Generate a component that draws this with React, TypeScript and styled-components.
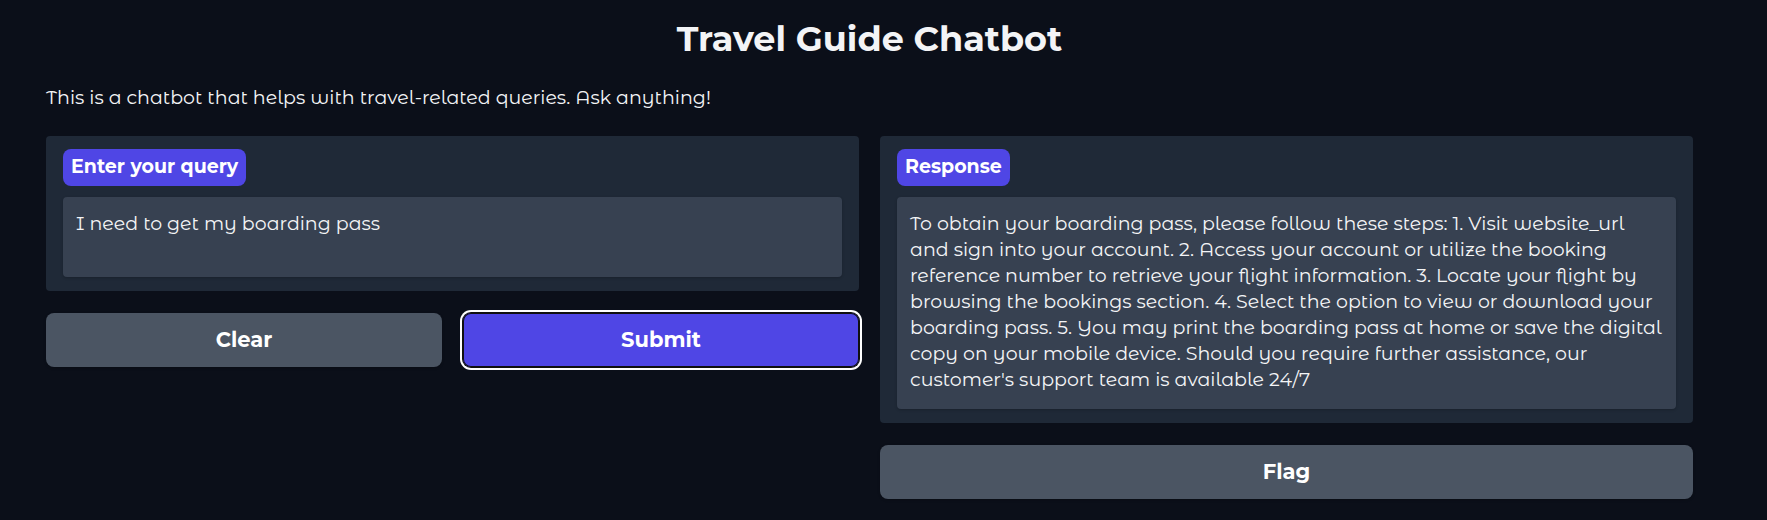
import React, { useState } from "react";
import styled, { createGlobalStyle } from "styled-components";

const GlobalStyle = createGlobalStyle`
  *, *::before, *::after { box-sizing: border-box; }
  body {
    margin: 0;
    background: #0b0f19;
    color: #f3f4f6;
    font-family: "Montserrat Alternates", Montserrat, Inter, "Open Sans", sans-serif;
    font-size: 19px;
    line-height: 27px;
  }
`;

const Page = styled.main`
  padding: 18px 74px 18px 46px;
`;

const Title = styled.h1`
  margin: 0 0 24px;
  font-family: Montserrat, Inter, "Open Sans", sans-serif;
  font-size: 35px;
  line-height: 42px;
  font-weight: 700;
  text-align: center;
`;

const Description = styled.p`
  margin: 0 0 25px;
`;

const Columns = styled.div`
  display: grid;
  grid-template-columns: 1fr 1fr;
  align-items: start;
  gap: 21px;
`;

const Column = styled.section`
  display: flex;
  flex-direction: column;
  gap: 22px;
  min-width: 0;
`;

const Panel = styled.div`
  display: flex;
  flex-direction: column;
  align-items: flex-start;
  gap: 11px;
  padding: 13px 17px 14px;
  border-radius: 4px;
  background: #1f2937;
`;

const FieldLabel = styled.label`
  padding: 4px 8px 6px;
  border-radius: 8px;
  background: #4f46e5;
  color: #ffffff;
  font-family: Montserrat, Inter, "Open Sans", sans-serif;
  font-weight: 700;
`;

const TextBox = styled.textarea<{ $minHeight: number }>`
  display: block;
  width: 100%;
  min-height: ${(p) => p.$minHeight}px;
  padding: 14px 13px;
  border: 0;
  border-radius: 4px;
  outline: none;
  resize: none;
  overflow: hidden;
  background: #374151;
  color: #f3f4f6;
  font: inherit;
  line-height: 26px;
  box-shadow: 0 1px 3px rgba(0, 0, 0, 0.2);
`;

const ButtonRow = styled.div`
  display: grid;
  grid-template-columns: 1fr 1fr;
  gap: 21px;
`;

const Button = styled.button<{ $primary?: boolean }>`
  height: 54px;
  padding: 0 16px 2px;
  border: 0;
  border-radius: 8px;
  background: ${(p) => (p.$primary ? "#4f46e5" : "#4b5563")};
  color: #ffffff;
  font-family: Montserrat, Inter, "Open Sans", sans-serif;
  font-size: 21px;
  line-height: 27px;
  font-weight: 700;
  cursor: pointer;
  box-shadow: ${(p) =>
    p.$primary
      ? "inset 0 0 0 1px #101010, 0 0 0 1px #101010, 0 0 0 3px #ffffff"
      : "0 1px 3px rgba(0, 0, 0, 0.2)"};
`;

const ANSWER = [
  "To obtain your boarding pass, please follow these steps: 1. Visit website_url",
  "and sign into your account. 2. Access your account or utilize the booking",
  "reference number to retrieve your flight information. 3. Locate your flight by",
  "browsing the bookings section. 4. Select the option to view or download your",
  "boarding pass. 5. You may print the boarding pass at home or save the digital",
  "copy on your mobile device. Should you require further assistance, our",
  "customer's support team is available 24/7",
].join("\n");

export default function App() {
  const [query, setQuery] = useState("I need to get my boarding pass");

  return (
    <>
      <GlobalStyle />
      <Page>
        <Title>Travel Guide Chatbot</Title>
        <Description>
          This is a chatbot that helps with travel-related queries. Ask anything!
        </Description>
        <Columns>
          <Column>
            <Panel>
              <FieldLabel htmlFor="query">Enter your query</FieldLabel>
              <TextBox
                id="query"
                rows={2}
                $minHeight={80}
                spellCheck={false}
                value={query}
                onChange={(e) => setQuery(e.target.value)}
              />
            </Panel>
            <ButtonRow>
              <Button type="button" onClick={() => setQuery("")}>Clear</Button>
              <Button type="submit" $primary>Submit</Button>
            </ButtonRow>
          </Column>
          <Column>
            <Panel>
              <FieldLabel htmlFor="response">Response</FieldLabel>
              <TextBox
                id="response"
                rows={7}
                $minHeight={212}
                readOnly
                spellCheck={false}
                value={ANSWER}
              />
            </Panel>
            <Button type="button">Flag</Button>
          </Column>
        </Columns>
      </Page>
    </>
  );
}
